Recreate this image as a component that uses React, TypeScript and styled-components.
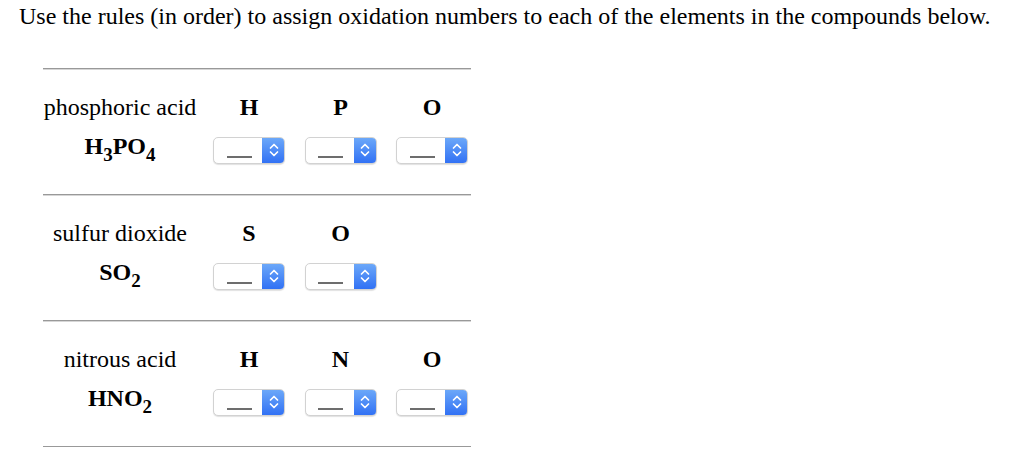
import React from "react";
import styled, { createGlobalStyle } from "styled-components";

const serif = `"Liberation Serif", "Times New Roman", Times, "DejaVu Serif", serif`;

const GlobalStyle = createGlobalStyle`
  html, body { margin: 0; padding: 0; background: #ffffff; }
  body { font-family: ${serif}; color: #000; }
`;

const Page = styled.div`
  padding: 1px 0 0 19px;
  width: 1005px;
  font-family: ${serif};
`;

const Heading = styled.p`
  margin: 0;
  font-family: ${serif};
  font-size: 24px;
  line-height: 30px;
  white-space: nowrap;
`;

const Sections = styled.div`
  margin: 37px 0 0 24px;
  width: 428px;
  border-bottom: 1px solid #999;
  box-shadow: 0 1px 0 #d6d6d6;
`;

const Section = styled.section`
  border-top: 1px solid #999;
  box-shadow: inset 0 1px 0 #d6d6d6;
  padding: 24px 0 30px;
  display: grid;
  grid-template-columns: 154px repeat(3, 79px);
  column-gap: 12.5px;
  row-gap: 15px;
  grid-template-rows: 28px 28px;
  font-family: ${serif};
  font-size: 24px;
`;

const Name = styled.div`
  text-align: center;
  line-height: 28px;
  white-space: nowrap;
`;

const Element = styled.div`
  text-align: center;
  font-weight: bold;
  line-height: 28px;
`;

const Formula = styled.div`
  text-align: center;
  font-weight: bold;
  line-height: 28px;
  margin-top: -4px;
  sub {
    font-size: 19px;
    vertical-align: -7px;
    line-height: 0;
  }
`;

const Cell = styled.div`
  display: flex;
  justify-content: center;
  align-items: center;
`;

const Control = styled.div`
  display: flex;
  width: 72px;
  height: 27px;
  box-sizing: border-box;
  border: 1px solid #d2d2d2;
  border-radius: 5px;
  background: #fff;
  box-shadow: 0 1px 1px rgba(0, 0, 0, 0.12);
  overflow: hidden;
`;

const Value = styled.span`
  flex: 1;
  display: flex;
  align-items: flex-end;
  justify-content: center;
  padding: 0 0 5px 2px;
`;

const Dash = styled.span`
  display: block;
  width: 25px;
  height: 2px;
  background: #6d6d6d;
`;

const Stepper = styled.span`
  width: 23px;
  display: flex;
  align-items: center;
  justify-content: center;
  background: linear-gradient(#6eaaf9, #2f6ff4);
  margin: -1px -1px -1px 0;
`;

function Select() {
  return (
    <Control role="combobox" aria-label="oxidation number">
      <Value>
        <Dash aria-label="___" />
      </Value>
      <Stepper>
        <svg width="12" height="18" viewBox="0 0 12 18" fill="none">
          <path d="M2.5 7 L6 3.5 L9.5 7" stroke="#fff" strokeWidth="1.7" strokeLinecap="round" strokeLinejoin="round" />
          <path d="M2.5 11 L6 14.5 L9.5 11" stroke="#fff" strokeWidth="1.7" strokeLinecap="round" strokeLinejoin="round" />
        </svg>
      </Stepper>
    </Control>
  );
}

type Compound = {
  name: string;
  formula: React.ReactNode;
  elements: string[];
};

const compounds: Compound[] = [
  {
    name: "phosphoric acid",
    formula: (
      <>
        H<sub>3</sub>PO<sub>4</sub>
      </>
    ),
    elements: ["H", "P", "O"],
  },
  {
    name: "sulfur dioxide",
    formula: (
      <>
        SO<sub>2</sub>
      </>
    ),
    elements: ["S", "O"],
  },
  {
    name: "nitrous acid",
    formula: (
      <>
        HNO<sub>2</sub>
      </>
    ),
    elements: ["H", "N", "O"],
  },
];

export default function App() {
  return (
    <>
      <GlobalStyle />
      <Page>
        <Heading>
          Use the rules (in order) to assign oxidation numbers to each of the elements in the compounds below.
        </Heading>
        <Sections>
          {compounds.map((c) => (
            <Section key={c.name}>
              <Name>{c.name}</Name>
              {[0, 1, 2].map((i) => (
                <Element key={i}>{c.elements[i] ?? ""}</Element>
              ))}
              <Formula>{c.formula}</Formula>
              {[0, 1, 2].map((i) => (
                <Cell key={i}>{c.elements[i] ? <Select /> : null}</Cell>
              ))}
            </Section>
          ))}
        </Sections>
      </Page>
    </>
  );
}
